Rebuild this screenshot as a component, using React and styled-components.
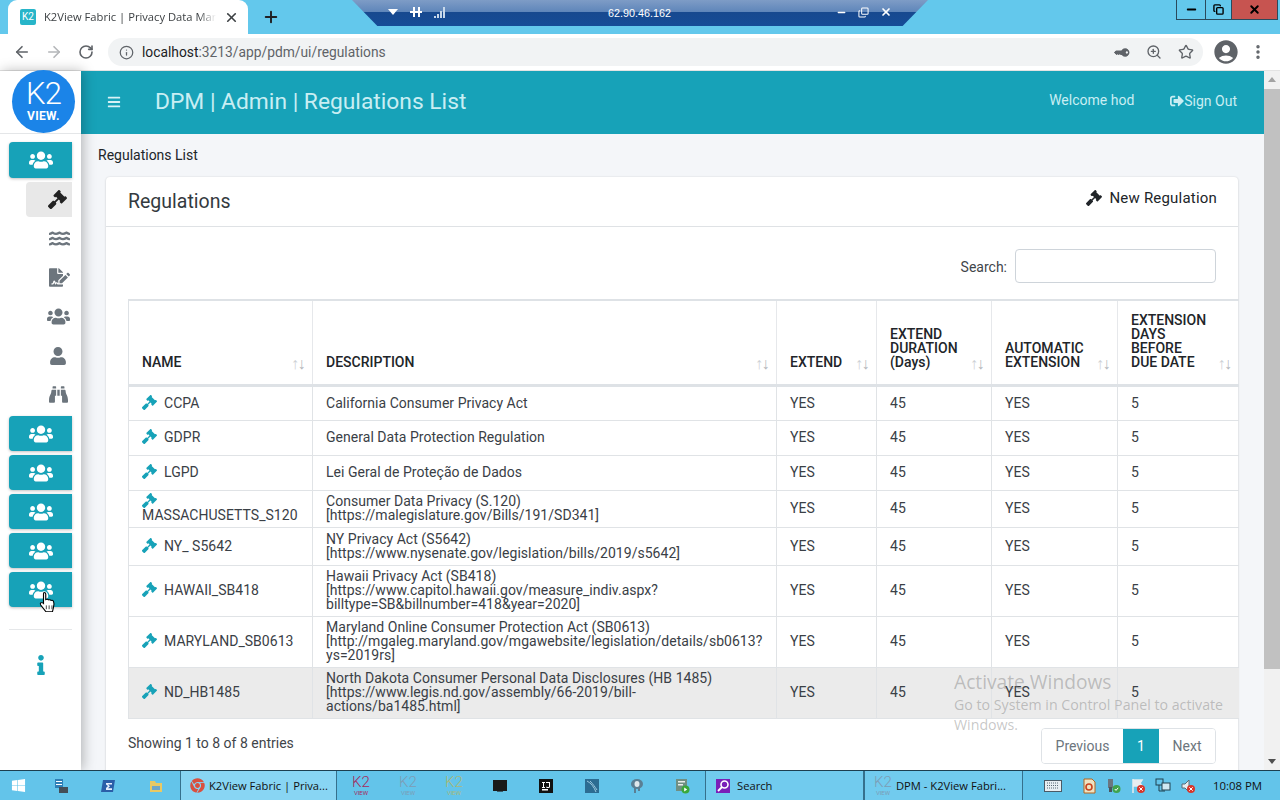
import React from 'react';
import styled, { createGlobalStyle } from 'styled-components';
import { FaUsers, FaGavel, FaWater, FaFileSignature, FaUser, FaBinoculars, FaInfo, FaBars, FaSignOutAlt, FaWindows, FaChrome, FaKey } from 'react-icons/fa';
import { MdAccountCircle } from 'react-icons/md';
import { ArrowLeft, ArrowRight, RotateCw, Info, ZoomIn, Star, MoreVertical, X, Plus, Minus, Copy } from 'lucide-react';

const Global = createGlobalStyle`
  html, body { margin: 0; padding: 0; height: 800px; overflow: hidden; background: #fff; }
  * { box-sizing: border-box; }
  body { font-family: Roboto, "Liberation Sans", sans-serif; color: #212529; }
`;

const Screen = styled.div`
  position: relative; width: 1280px; height: 800px; overflow: hidden;
  display: flex; flex-direction: column;
`;

/* ---- browser chrome ---- */
const TabStrip = styled.div`
  height: 34px; flex: none; background: #63c8ec; display: flex; align-items: flex-end; padding-left: 8px;
  position: relative;
`;
const Tab = styled.div`
  width: 240px; height: 34px; background: #fff; border-radius: 9px 9px 0 0;
  display: flex; align-items: center; padding: 0 8px 0 12px; gap: 8px;
`;
const Favicon = styled.div`
  width: 16px; height: 16px; border-radius: 2px; background: #27b5c9; color: #fff; flex: none;
  font: 400 10px/16px Roboto, sans-serif; text-align: center;
`;
const TabTitle = styled.div`
  flex: none; width: 172px; overflow: hidden; white-space: nowrap; font: 11.2px/16px "Open Sans", sans-serif; color: #3c4043;
  -webkit-mask-image: linear-gradient(to right, #000 90%, transparent);
`;
const NewTab = styled.div`
  height: 34px; margin-left: 14px; display: flex; align-items: center; color: #202124;
`;
const RemoteBar = styled.div`
  position: absolute; left: 352px; top: 0; width: 576px; height: 26px;
  clip-path: polygon(0 0, 100% 0, 95.6% 100%, 4.4% 100%);
  background: linear-gradient(#7e9cc6 0, #5f86ba 45%, #17498f 48%, #164c97 100%);
  color: #fff; font: 10px/26px "Liberation Sans", sans-serif;
  display: flex; align-items: center;
`;
const RemoteLeft = styled.div`
  position: absolute; left: 36px; top: 4px; height: 16px; display: flex; align-items: center; gap: 12px;
`;
const RemoteRight = styled.div`
  position: absolute; right: 36px; top: 4px; height: 16px; display: flex; align-items: center; gap: 11px;
`;
const RemoteIp = styled.div`
  position: absolute; left: 0; right: 0; top: 0; text-align: center; line-height: 26px; font-size: 10.8px; padding-right: 1px;
`;
const WinControls = styled.div`
  position: absolute; right: 2px; top: 0; height: 20px; display: flex;
  border: 1px solid #2a4a5c; border-top: 0;
`;
const WinBtn = styled.div`
  width: ${p => p.$w}px; display: flex; align-items: center; justify-content: center; color: #000;
  background: ${p => p.$close ? '#c75450' : 'transparent'};
  border-left: ${p => p.$first ? '0' : '1px solid #2a4a5c'};
`;
const Toolbar = styled.div`
  height: 37px; flex: none; background: #fff; display: flex; align-items: center; border-bottom: 1px solid #e3e3e3;
`;
const NavBtn = styled.div`
  width: 32px; display: flex; justify-content: center; color: ${p => p.$off ? '#b4b6b9' : '#5f6368'};
  &:first-child { margin-left: 6px; }
`;
const Omnibox = styled.div`
  margin-left: 6px; width: 1095px; height: 28px; border-radius: 14px; background: #f1f3f4;
  display: flex; align-items: center; padding: 0 1px 0 11px; color: #5f6368;
`;
const Url = styled.div`
  margin-left: 8px; flex: 1; font: 13.8px/28px Roboto, sans-serif; color: #5f6368;
  & b { font-weight: 400; color: #202124; }
`;
const OmniIcon = styled.div`
  width: 32px; display: flex; justify-content: center; color: #5f6368;
`;
const Profile = styled.div`
  margin-left: 7px; width: 32px; display: flex; justify-content: center; color: #5f6368;
`;

/* ---- page ---- */
const Page = styled.div`
  flex: 1; min-height: 0; display: flex; background: #f4f6f9;
`;
const Sidebar = styled.aside`
  width: 81px; flex: none; background: #fff; display: flex; flex-direction: column;
  box-shadow: 2px 0 12px rgba(0,0,0,.28); position: relative; z-index: 2;
`;
const LogoWrap = styled.div`
  height: 63px; flex: none; border-bottom: 1px solid #e4e6e8; padding-left: 12px; margin-bottom: 8px;
`;
const Logo = styled.div`
  width: 63px; height: 63px; margin-top: -1px; border-radius: 50%; background: #1b84e8; color: #fff;
  display: flex; flex-direction: column; align-items: center; justify-content: center;
`;
const LogoK2 = styled.div`
  font: 300 31px/28px Roboto, sans-serif; letter-spacing: -1px;
`;
const LogoView = styled.div`
  font: 700 12px/13px Roboto, sans-serif; letter-spacing: .3px; margin-top: 2px;
`;
const GroupBtn = styled.div`
  width: 63px; height: ${p => p.$h || 35}px; margin-left: 9px; flex: none; background: #17a2b8; color: #fff;
  border-radius: 4px 0 0 4px; display: flex; align-items: center; justify-content: center;
  box-shadow: 0 1px 3px rgba(0,0,0,.25);
  margin-bottom: 4px; font-size: 24px;
`;
const SubActive = styled.div`
  width: 46px; height: 35px; margin-left: 26px; flex: none; background: #e8e8e8; border-radius: 4px 0 0 4px;
  display: flex; align-items: center; justify-content: flex-end; padding-right: 5px; color: #222; font-size: 19px;
`;
const SubItem = styled.div`
  height: 39px; width: 81px; flex: none; padding-right: ${p => p.$pr || 11}px; display: flex; align-items: center; justify-content: flex-end;
  color: #6c757d; font-size: ${p => p.$size}px;
`;
const SubSpacer = styled.div`
  height: 2px; flex: none;
`;
const Divider = styled.hr`
  margin: 18px 9px 0; width: 63px; border: 0; border-top: 1px solid #e5e7e9;
`;
const InfoBtn = styled.div`
  margin-top: 25px; width: 63px; margin-left: 9px; display: flex; justify-content: center; color: #17a2b8; font-size: 20px;
`;
const Main = styled.div`
  flex: 1; min-width: 0; display: flex; flex-direction: column;
`;
const Header = styled.header`
  height: 63px; flex: none; background: #17a2b8; color: #c9eef3; display: flex; align-items: center;
`;
const Burger = styled.div`
  margin: -1px 0 0 26px; width: 48px; font-size: 14px; display: flex; color: #d8f2f6;
`;
const HeaderTitle = styled.h1`
  margin: -1px 0 0; flex: 1; font: 400 22.8px/28px Roboto, sans-serif;
`;
const Welcome = styled.div`
  font-size: 14px; margin-top: -5px; margin-right: 36px;
`;
const SignOut = styled.div`
  font-size: 14px; margin-right: 27px; display: flex; align-items: center; margin-top: -3px;
`;
const Content = styled.main`
  flex: 1; min-height: 0; padding: 11px 26px 0 25px; overflow: hidden;
`;
const Crumb = styled.div`
  font-size: 14px; line-height: 20px; margin: 0 0 12px -8px;
`;
const Card = styled.section`
  background: #fff; border-radius: 4px; box-shadow: 0 0 2px rgba(0,0,0,.12), 0 1px 3px rgba(0,0,0,.08);
  height: 640px;
`;
const CardHead = styled.div`
  height: 50px; border-bottom: 1px solid #dfe2e5; padding: 0 21px 0 22px; display: flex; justify-content: space-between;
`;
const CardTitle = styled.h3`
  margin: 13px 0 0; font: 400 19.5px/24px Roboto, sans-serif; color: #343a40;
`;
const NewBtn = styled.div`
  margin-top: 11px; height: 20px; display: flex; align-items: center; gap: 7px; font-size: 15px; letter-spacing: .2px; color: #212529;
`;
const CardBody = styled.div`
  padding: 22px 22px 0;
`;
const SearchRow = styled.label`
  display: flex; justify-content: flex-end; align-items: center; gap: 8px; height: 34px; font-size: 14px; color: #3f454a;
`;
const SearchLabel = styled.span`
  margin-top: 2px;
`;
const SearchInput = styled.input`
  width: 201px; height: 34px; border: 1px solid #ced4da; border-radius: 4px; background: #fff; outline: 0;
`;
const Table = styled.table`
  margin-top: 16px; width: 1110px; table-layout: fixed; border-collapse: collapse; font-size: 14px; color: #343a40;
`;
const Th = styled.th`
  position: relative; width: ${p => p.$w}px; height: 85px; vertical-align: bottom; text-align: left;
  padding: 0 13px 15px; font: 500 14px/14px Roboto, sans-serif; color: #212529;
  border: 1px solid #e6e8eb; border-top: 2px solid #dee2e6; border-bottom: 3px solid #dee2e6;
  border-right: 0; &:first-child { border-left: 1px solid #dee2e6; }
`;
const Sort = styled.span`
  position: absolute; right: 8px; bottom: 12px; font: 400 16px/16px "Liberation Sans", sans-serif; color: #cdd1d5; letter-spacing: -1.5px;
  & i { font-style: normal; color: #b4b8bc; }
`;
const Tr = styled.tr`
  height: ${p => p.$h}px; background: ${p => p.$sel ? '#ebebeb' : 'transparent'};
`;
const Td = styled.td`
  padding: 0 13px 1px; font: 400 14px/14px Roboto, sans-serif; vertical-align: middle; letter-spacing: .03px;
  border: 1px solid #e0e3e6; border-right: 0; word-break: normal; color: #3a4046;
`;
const NameIcon = styled.span`
  display: inline-block; width: 22px; height: 14px; color: #17a2b8; font-size: 15px; vertical-align: top;
  & svg { display: block; margin-top: -1px; }
`;
const Foot = styled.div`
  display: flex; justify-content: space-between; align-items: flex-start; margin-top: 9px; font-size: 14px; color: #3f454a;
`;
const FootInfo = styled.div`
  margin-top: 7px; line-height: 16px;
`;
const Pager = styled.div`
  display: flex; height: 36px; border: 1px solid #dee2e6; border-radius: 4px; overflow: hidden;
`;
const PageBtn = styled.div`
  width: ${p => p.$w}px; display: flex; align-items: center; justify-content: center;
  background: ${p => p.$on ? '#17a2b8' : '#fff'}; color: ${p => p.$on ? '#fff' : '#6c757d'}; font-size: 14px;
`;
const Scrollbar = styled.div`
  width: 16px; flex: none; background: #f1f1f1; display: flex; flex-direction: column; align-items: center;
`;
const ScrollThumb = styled.div`
  width: 16px; height: 580px; background: #c1c1c1; margin: 1px 0 auto;
`;
const ArrowUp = styled.div`
  margin-top: 6px; width: 0; height: 0; border: 4px solid transparent; border-top: 0; border-bottom: 5px solid #a3a3a3; margin-bottom: 6px;
`;
const ArrowDown = styled.div`
  margin-bottom: 6px; width: 0; height: 0; border: 4px solid transparent; border-bottom: 0; border-top: 5px solid #505050;
`;

/* ---- overlays ---- */
const Watermark = styled.div`
  position: absolute; left: 954px; top: 670px; width: 290px; color: rgba(120,120,120,.42); font-family: "Open Sans", "Liberation Sans", sans-serif;
  pointer-events: none; z-index: 5;
`;
const WmTitle = styled.div`
  font-size: 19.2px; line-height: 24px; margin-bottom: 1px;
`;
const WmText = styled.div`
  font-size: 14.2px; line-height: 20px;
`;
const Pointer = styled.svg`
  position: absolute; left: 39px; top: 591px; z-index: 6;
`;

/* ---- taskbar ---- */
const Taskbar = styled.div`
  height: 30px; flex: none; position: relative; z-index: 4; background: #63c4ea; border-top: 1px solid #1d3f50; display: flex; align-items: center;
  font: 11.2px/29px "Open Sans", "Liberation Sans", sans-serif; color: #111;
`;
const Slot = styled.div`
  width: ${p => p.$w}px; flex: none; height: 29px; display: flex; align-items: center; justify-content: center;
`;
const TaskBtn = styled.div`
  width: ${p => p.$w}px; flex: none; height: 29px; display: flex; align-items: center; gap: ${p => p.$gap || 6}px; padding-left: ${p => p.$pad}px;
  background: ${p => p.$on ? '#88d5f3' : '#71cbee'}; border-left: 1px solid #35708c; border-right: 1px solid #35708c; white-space: nowrap;
`;
const MiniK2 = styled.div`
  width: 20px; color: ${p => p.$c}; display: flex; flex-direction: column; align-items: center;
  & b { font: 300 15px/14px Roboto, sans-serif; }
  & i { font: 400 6px/8px Roboto, sans-serif; }
`;
const Tray = styled.div`
  margin-left: -5px; display: flex; align-items: center;
`;
const Clock = styled.div`
  margin-left: 13px; font-size: 11.4px; color: #111;
`;
const TrayIcon = styled.div`
  width: ${p => p.$w || 25}px; flex: none; display: flex; justify-content: center;
`;

const rows = [
  { n: 'CCPA', h: 35, d: ['California Consumer Privacy Act'] },
  { n: 'GDPR', h: 35, d: ['General Data Protection Regulation'] },
  { n: 'LGPD', h: 35, d: ['Lei Geral de Proteção de Dados'] },
  { n: 'MASSACHUSETTS_S120', h: 37, d: ['Consumer Data Privacy (S.120)', '[https://malegislature.gov/Bills/191/SD341]'] },
  { n: 'NY_ S5642', h: 38, d: ['NY Privacy Act (S5642)', '[https://www.nysenate.gov/legislation/bills/2019/s5642]'] },
  { n: 'HAWAII_SB418', h: 51, d: ['Hawaii Privacy Act (SB418)', '[https://www.capitol.hawaii.gov/measure_indiv.aspx?', 'billtype=SB&billnumber=418&year=2020]'] },
  { n: 'MARYLAND_SB0613', h: 51, d: ['Maryland Online Consumer Protection Act (SB0613)', '[http://mgaleg.maryland.gov/mgawebsite/legislation/details/sb0613?', 'ys=2019rs]'] },
  { n: 'ND_HB1485', h: 51, sel: true, d: ['North Dakota Consumer Personal Data Disclosures (HB 1485)', '[https://www.legis.nd.gov/assembly/66-2019/bill-', 'actions/ba1485.html]'] },
];

const cols = [
  { w: 184, t: ['NAME'] },
  { w: 464, t: ['DESCRIPTION'] },
  { w: 100, t: ['EXTEND'] },
  { w: 115, t: ['EXTEND', 'DURATION', '(Days)'] },
  { w: 126, t: ['AUTOMATIC', 'EXTENSION'] },
  { w: 121, t: ['EXTENSION', 'DAYS', 'BEFORE', 'DUE DATE'] },
];

const Lines = ({ items }) => items.map((l, i) => <React.Fragment key={i}>{i > 0 && <br />}{l}</React.Fragment>);

const Sq = ({ c, s = 16, children }) => (
  <svg width={s} height={s} viewBox="0 0 16 16">{children || <rect x="1" y="1" width="14" height="14" fill={c} />}</svg>
);

export default function App() {
  return (
    <Screen>
      <Global />
      <TabStrip>
        <Tab>
          <Favicon>K2</Favicon>
          <TabTitle>K2View Fabric | Privacy Data Management</TabTitle>
          <X size={15} strokeWidth={2.6} color="#3c4043" />
        </Tab>
        <NewTab><Plus size={18} strokeWidth={2.6} /></NewTab>
        <RemoteBar>
          <RemoteLeft>
            <svg width="10" height="6" viewBox="0 0 10 6"><path d="M0 0h10L5 6z" fill="#fff" /></svg>
            <svg width="12" height="10" viewBox="0 0 12 10"><path d="M0 4h12v2H0zM3 0h2v10H3zM8 0h2v10H8z" fill="#fff" /></svg>
            <svg width="12" height="12" viewBox="0 0 12 12"><path d="M0 10h2v2H0zM3 8h2v4H3zM6 5h2v7H6zM9 1h2v11H9z" fill="#c8d8ea" /></svg>
          </RemoteLeft>
          <RemoteIp>62.90.46.162</RemoteIp>
          <RemoteRight>
            <Minus size={11} strokeWidth={3} />
            <Copy size={11} strokeWidth={2.2} style={{ transform: 'scaleY(-1)' }} />
            <X size={12} strokeWidth={3.4} />
          </RemoteRight>
        </RemoteBar>
        <WinControls>
          <WinBtn $w={28} $first><Minus size={13} strokeWidth={3.4} /></WinBtn>
          <WinBtn $w={26}><Copy size={11} strokeWidth={3} /></WinBtn>
          <WinBtn $w={46} $close><X size={13} strokeWidth={3.6} /></WinBtn>
        </WinControls>
      </TabStrip>

      <Toolbar>
        <NavBtn><ArrowLeft size={18} strokeWidth={2.2} /></NavBtn>
        <NavBtn $off><ArrowRight size={18} strokeWidth={2.2} /></NavBtn>
        <NavBtn><RotateCw size={16} strokeWidth={2.4} /></NavBtn>
        <Omnibox>
          <Info size={15} strokeWidth={2} />
          <Url><b>localhost</b>:3213/app/pdm/ui/regulations</Url>
          <OmniIcon><FaKey size={13} style={{ transform: 'rotate(45deg) scale(.95)' }} /></OmniIcon>
          <OmniIcon><ZoomIn size={16} strokeWidth={2} /></OmniIcon>
          <OmniIcon><Star size={16} strokeWidth={2} /></OmniIcon>
        </Omnibox>
        <Profile><MdAccountCircle size={28} /></Profile>
        <NavBtn><MoreVertical size={18} strokeWidth={2.6} /></NavBtn>
      </Toolbar>

      <Page>
        <Sidebar>
          <LogoWrap>
            <Logo>
              <LogoK2>K2</LogoK2>
              <LogoView>VIEW.</LogoView>
            </Logo>
          </LogoWrap>
          <GroupBtn $h={36}><FaUsers /></GroupBtn>
          <SubActive><FaGavel /></SubActive>
          <SubSpacer />
          <SubItem $size={21}><FaWater /></SubItem>
          <SubItem $size={21}><FaFileSignature /></SubItem>
          <SubItem $size={23}><FaUsers /></SubItem>
          <SubItem $size={18} $pr={14}><FaUser /></SubItem>
          <SubItem $size={19} $pr={13}><FaBinoculars /></SubItem>
          <SubSpacer />
          <GroupBtn><FaUsers /></GroupBtn>
          <GroupBtn><FaUsers /></GroupBtn>
          <GroupBtn><FaUsers /></GroupBtn>
          <GroupBtn><FaUsers /></GroupBtn>
          <GroupBtn><FaUsers /></GroupBtn>
          <Divider />
          <InfoBtn><FaInfo /></InfoBtn>
        </Sidebar>
        <Main>
          <Header>
            <Burger><FaBars /></Burger>
            <HeaderTitle>DPM | Admin | Regulations List</HeaderTitle>
            <Welcome>Welcome hod</Welcome>
            <SignOut><FaSignOutAlt size={14} />Sign Out</SignOut>
          </Header>
          <Content>
            <Crumb>Regulations List</Crumb>
            <Card>
              <CardHead>
                <CardTitle>Regulations</CardTitle>
                <NewBtn><FaGavel size={16} />New Regulation</NewBtn>
              </CardHead>
              <CardBody>
                <SearchRow><SearchLabel>Search:</SearchLabel> <SearchInput /></SearchRow>
                <Table>
                  <thead>
                    <tr>
                      {cols.map((c, i) => (
                        <Th key={i} $w={c.w}><Lines items={c.t} /><Sort>↑<i>↓</i></Sort></Th>
                      ))}
                    </tr>
                  </thead>
                  <tbody>
                    {rows.map(r => (
                      <Tr key={r.n} $h={r.h} $sel={r.sel}>
                        <Td><NameIcon><FaGavel /></NameIcon>{r.n}</Td>
                        <Td><Lines items={r.d} /></Td>
                        <Td>YES</Td>
                        <Td>45</Td>
                        <Td>YES</Td>
                        <Td>5</Td>
                      </Tr>
                    ))}
                  </tbody>
                </Table>
                <Foot>
                  <FootInfo>Showing 1 to 8 of 8 entries</FootInfo>
                  <Pager>
                    <PageBtn $w={81}>Previous</PageBtn>
                    <PageBtn $w={36} $on>1</PageBtn>
                    <PageBtn $w={56}>Next</PageBtn>
                  </Pager>
                </Foot>
              </CardBody>
            </Card>
          </Content>
        </Main>
        <Scrollbar>
          <ArrowUp />
          <ScrollThumb />
          <ArrowDown />
        </Scrollbar>
      </Page>

      <Taskbar>
        <Slot $w={37}><FaWindows size={15} color="#fff" /></Slot>
        <Slot $w={47}>
          <Sq><rect x="2" y="1" width="8" height="9" fill="#2f7fb6" /><rect x="3" y="3" width="6" height="1" fill="#fff" /><rect x="3" y="6" width="6" height="1" fill="#fff" /><rect x="6" y="9" width="9" height="6" fill="#444e57" /></Sq>
        </Slot>
        <Slot $w={47}>
          <Sq><path d="M3 2h12l-2 12H1z" fill="#2a5ea8" /><path d="M6 5h6v1.6H8l2 1.6-2 2h4V12H6V10l2-2-2-1.5z" fill="#e8eefc" /></Sq>
        </Slot>
        <Slot $w={49}>
          <Sq><path d="M2 3h5l1 2h6v9H2z" fill="#e9c964" /><rect x="4" y="8" width="8" height="4" fill="#6fa7c9" /></Sq>
        </Slot>
        <TaskBtn $w={157} $on $pad={9} $gap={4}><FaChrome size={15} color="#d9503f" />K2View Fabric | Priva...</TaskBtn>
        <Slot $w={48}><MiniK2 $c="#a52a5c"><b>K2</b><i>VIEW</i></MiniK2></Slot>
        <Slot $w={46}><MiniK2 $c="#7d9db5"><b>K2</b><i>VIEW</i></MiniK2></Slot>
        <Slot $w={46}><MiniK2 $c="#a8b978"><b>K2</b><i>VIEW</i></MiniK2></Slot>
        <Slot $w={46}><Sq><rect x="1" y="2" width="14" height="11" fill="#1a1a1a" /><rect x="5" y="13" width="6" height="1" fill="#3a5b6a" /></Sq></Slot>
        <Slot $w={46}><Sq><rect x="1" y="1" width="14" height="14" fill="#111" /><rect x="4" y="11" width="6" height="1.5" fill="#fff" /><path d="M4 4h3v1H6v4h1v1H4V9h1V5H4zM8 4h4v4.5c0 1-.8 1.5-2 1.5S8 9.5 8 9l1-.5c0 .4.4.6 1 .6.5 0 1-.2 1-.7V5H8z" fill="#fff" /></Sq></Slot>
        <Slot $w={45}><Sq><rect x="1" y="1" width="14" height="14" fill="#2c6c92" /><path d="M3 3c4 2 7 6 9 11M6 3c3 3 5 6 7 9" stroke="#9dc9e0" strokeWidth="1" fill="none" /></Sq></Slot>
        <Slot $w={45}><Sq><ellipse cx="8" cy="6" rx="6" ry="5" fill="#5a7f94" /><rect x="5" y="9" width="2" height="6" fill="#5a7f94" /><rect x="9" y="9" width="2" height="4" fill="#5a7f94" /><ellipse cx="8" cy="6" rx="2.5" ry="3" fill="#dfe8ec" /></Sq></Slot>
        <Slot $w={46}><Sq><rect x="2" y="1" width="11" height="12" fill="#6f8f83" /><rect x="4" y="3" width="7" height="1.5" fill="#e8eeea" /><rect x="4" y="6" width="5" height="1.5" fill="#e8eeea" /><circle cx="11.5" cy="11.5" r="4" fill="#3aa83a" /><path d="M10.2 9.5l3 2-3 2z" fill="#fff" /></Sq></Slot>
        <TaskBtn $w={159} $pad={9}>
          <Sq><rect x="1" y="1" width="14" height="14" fill="#7a1fb8" /><circle cx="9.5" cy="6.5" r="3.5" fill="none" stroke="#fff" strokeWidth="1.6" /><path d="M7 9l-4 4" stroke="#fff" strokeWidth="1.8" /></Sq>
          Search
        </TaskBtn>
        <TaskBtn $w={159} $pad={8} $gap={3}><MiniK2 $c="#7d9db5"><b>K2</b><i>VIEW</i></MiniK2>DPM - K2View Fabri...</TaskBtn>
        <Slot $w={60}><svg width="18" height="12" viewBox="0 0 18 12"><rect x=".5" y=".5" width="17" height="11" fill="#e8eef2" stroke="#4a5a66" /><path d="M3 3h12M3 5.500h12M3 8h12" stroke="#5a6a76" strokeDasharray="1 1" /></svg></Slot>
        <Tray>
          <TrayIcon $w={22}><Sq><path d="M3 1h8l3 3v11H3z" fill="#efe3c2" stroke="#b5651d" /><circle cx="8" cy="9" r="3" fill="none" stroke="#c9431f" strokeWidth="1.6" /></Sq></TrayIcon>
          <TrayIcon><Sq><rect x="3" y="1" width="5" height="9" fill="#6b7680" /><rect x="4" y="9" width="3" height="5" fill="#4a555e" /><circle cx="11.5" cy="11" r="4" fill="#3fa34d" /><path d="M9.800 11l1.200 1.400 2.200-2.600" stroke="#fff" fill="none" /></Sq></TrayIcon>
          <TrayIcon><Sq><path d="M3 1v14M3 2h9l-2 3 2 3H3" stroke="#e8edf0" strokeWidth="1.5" fill="#e8edf0" /><circle cx="11" cy="11" r="4" fill="#d8352a" /><path d="M9.300 9.300l3.400 3.400m0-3.400l-3.400 3.400" stroke="#fff" /></Sq></TrayIcon>
          <TrayIcon><Sq><rect x="1" y="1" width="7" height="6" fill="none" stroke="#20404f" /><rect x="7" y="5" width="8" height="7" fill="#cfe8f2" stroke="#20404f" /><path d="M4 7v6h6" stroke="#20404f" fill="none" /></Sq></TrayIcon>
          <TrayIcon><Sq><path d="M2 6h3l4-4v12l-4-4H2z" fill="#e8edf0" stroke="#5a6a76" /><circle cx="11" cy="11" r="4" fill="#d8352a" /><path d="M9.300 9.300l3.400 3.400m0-3.400l-3.400 3.400" stroke="#fff" /></Sq></TrayIcon>
        </Tray>
        <Clock>10:08 PM</Clock>
      </Taskbar>

      <Watermark>
        <WmTitle>Activate Windows</WmTitle>
        <WmText>Go to System in Control Panel to activate<br />Windows.</WmText>
      </Watermark>
      <Pointer width="18" height="23" viewBox="0 0 16 24" preserveAspectRatio="none">
        <path d="M4.500 1.500c1 0 1.500.7 1.500 1.500v6c.8-.6 2-.5 2.500.3.800-.4 1.800-.2 2.300.6.800-.3 1.700.1 2.100.9.600 1.500.6 4.500-.2 7.200l-.7 3.500H6l-4.500-7c-.5-1-.4-1.800.3-2.200.7-.4 1.500 0 2.200.8V3c0-.8 0-1.500.5-1.500z" fill="#fff" stroke="#000" strokeWidth="1" />
        <path d="M6.500 15v4M9 15v4M11.500 15v4" stroke="#000" strokeWidth=".7" />
      </Pointer>
    </Screen>
  );
}
